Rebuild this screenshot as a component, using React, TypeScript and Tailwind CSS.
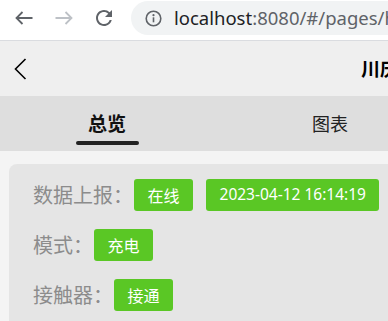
import React from "react";

const cjk = { fontFamily: '"Noto Sans CJK SC", "Noto Sans", sans-serif' };
const latin = { fontFamily: '"Noto Sans", "Noto Sans CJK SC", sans-serif' };

function Badge({ children, wide }: { children: React.ReactNode; wide?: boolean }) {
  return (
    <div
      className={`h-[32px] flex items-center justify-center rounded-[3px] bg-[#5ac725] text-white leading-none whitespace-nowrap ${wide ? "px-[13.5px] text-[15.5px]" : "px-[13.5px] text-[16px]"}`}
      style={wide ? latin : cjk}
    >
      {children}
    </div>
  );
}

export default function App() {
  return (
    <div className="w-[388px] h-[321px] overflow-hidden bg-[#f4f4f4] flex flex-col" style={cjk}>
      {/* browser bar */}
      <div className="h-[41px] shrink-0 bg-white border-b border-[#dadce0] flex items-start pt-[1px] pl-[4px]">
        <div className="w-[40px] h-[34px] flex items-center justify-center">
          <svg width="18" height="14" viewBox="0 0 18 14" fill="none" stroke="#5f6368" strokeWidth="1.8">
            <path d="M1.5 7H17.5M7.5 1L1.5 7L7.5 13" />
          </svg>
        </div>
        <div className="w-[40px] h-[34px] flex items-center justify-center">
          <svg width="18" height="14" viewBox="0 0 18 14" fill="none" stroke="#bdc1c6" strokeWidth="1.8">
            <path d="M16.5 7H0.5M10.5 1L16.5 7L10.5 13" />
          </svg>
        </div>
        <div className="w-[40px] h-[34px] flex items-center justify-center">
          <svg width="24" height="24" viewBox="0 0 24 24" fill="#5f6368">
            <path d="M17.65 6.35A7.958 7.958 0 0 0 12 4c-4.42 0-7.99 3.58-7.99 8s3.57 8 7.99 8c3.73 0 6.84-2.55 7.73-6h-2.08A5.99 5.99 0 0 1 12 18c-3.31 0-6-2.69-6-6s2.69-6 6-6c1.66 0 3.14.69 4.22 1.78L13 11h7V4l-2.35 2.35z" />
          </svg>
        </div>
        <div className="ml-[7px] h-[34px] flex-1 min-w-0 rounded-l-full bg-[#f1f3f4] flex items-center pl-[14px] overflow-hidden whitespace-nowrap">
          <svg width="17" height="17" viewBox="0 0 17 17" className="shrink-0">
            <circle cx="8.5" cy="8.5" r="7.3" fill="none" stroke="#5f6368" strokeWidth="1.6" />
            <circle cx="8.5" cy="5.2" r="1.1" fill="#5f6368" />
            <rect x="7.7" y="7.3" width="1.6" height="5" fill="#5f6368" />
          </svg>
          <span className="ml-[12px] text-[18.5px] text-[#202124]" style={latin}>
            localhost<span className="text-[#5f6368]">:8080/#/pages/home/index</span>
          </span>
        </div>
      </div>

      {/* header */}
      <div className="h-[55px] shrink-0 bg-[#efefef] flex items-center pl-[14px] overflow-hidden whitespace-nowrap">
        <svg width="13" height="22" viewBox="0 0 13 22" fill="none" stroke="#000" strokeWidth="1.6" className="shrink-0">
          <path d="M11.5 1L1.5 11L11.5 21" />
        </svg>
        <span className="ml-[334px] text-[19px] font-bold text-black">川庆充电站</span>
      </div>

      {/* tabs */}
      <div className="h-[55px] shrink-0 bg-[#dedede] flex overflow-hidden whitespace-nowrap">
        <div className="w-[214px] shrink-0 flex flex-col items-center pt-[12px]">
          <span className="text-[19px] leading-[30px] font-bold text-[#111]">总览</span>
          <div className="mt-[3px] w-[63px] h-[4px] rounded-full bg-[#222]" />
        </div>
        <div className="w-[232px] shrink-0 flex flex-col items-center pt-[12px]">
          <span className="text-[18px] leading-[30px] text-[#222]">图表</span>
        </div>
      </div>

      {/* content */}
      <div className="flex-1 pt-[13px] pl-[9px] overflow-hidden">
        <div className="w-[420px] h-full rounded-t-[8px] bg-[#e5e5e5] pt-[15px] pl-[24px] flex flex-col gap-[18px] whitespace-nowrap">
          <div className="flex items-center h-[32px]">
            <span className="text-[20px] text-[#8c8c8c]">数据上报：</span>
            <div className="ml-[1px]">
              <Badge>在线</Badge>
            </div>
            <div className="ml-[13px]">
              <Badge wide>2023-04-12 16:14:19</Badge>
            </div>
          </div>
          <div className="flex items-center h-[32px]">
            <span className="text-[20px] text-[#8c8c8c]">模式：</span>
            <div className="ml-[1px]">
              <Badge>充电</Badge>
            </div>
          </div>
          <div className="flex items-center h-[32px]">
            <span className="text-[20px] text-[#8c8c8c]">接触器：</span>
            <div className="ml-[1px]">
              <Badge>接通</Badge>
            </div>
          </div>
        </div>
      </div>
    </div>
  );
}
